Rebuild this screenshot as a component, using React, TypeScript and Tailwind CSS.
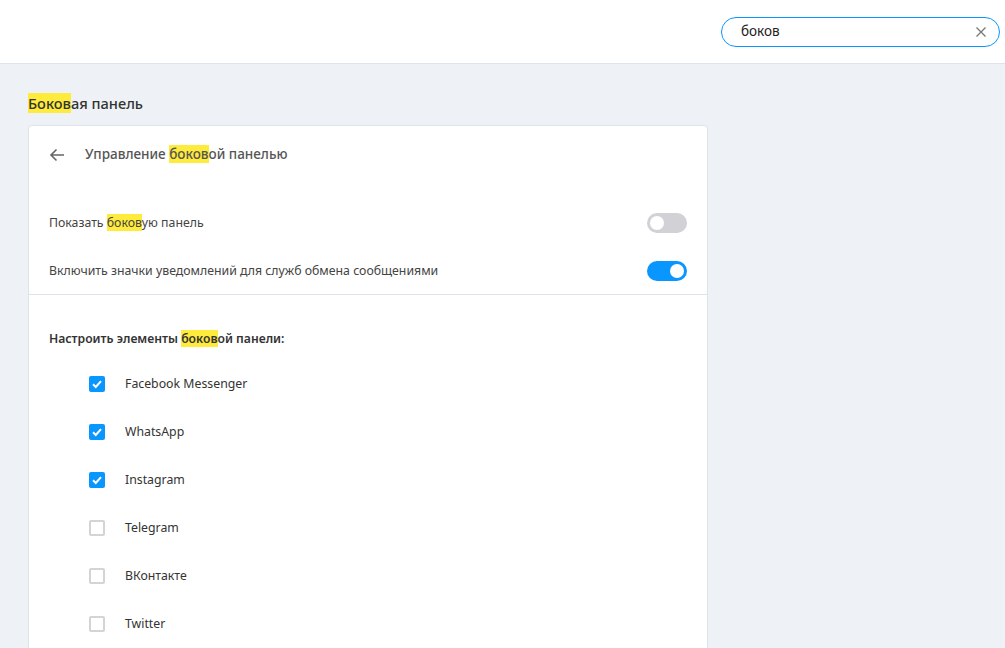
import React from "react";

const H = ({ children }: { children: React.ReactNode }) => (
  <span className="bg-[#ffeb3b]">{children}</span>
);

const Toggle = ({ on }: { on: boolean }) => (
  <div
    className={`w-[40px] h-[20px] rounded-full flex items-center px-[3px] ${
      on ? "bg-[#0a96ff] justify-end" : "bg-[#d1d1d6] justify-start"
    }`}
  >
    <div className="w-[14px] h-[14px] rounded-full bg-white" />
  </div>
);

const Check = ({ on }: { on: boolean }) =>
  on ? (
    <div className="w-[16px] h-[16px] rounded-[2px] bg-[#0a96ff] flex items-center justify-center">
      <svg width="12" height="12" viewBox="0 0 12 12">
        <path d="M2 6.2 L4.8 9 L10 3.2" fill="none" stroke="white" strokeWidth="2" />
      </svg>
    </div>
  ) : (
    <div className="w-[16px] h-[16px] rounded-[2px] border-2 border-[#d3d3d8] bg-white" />
  );

export default function App() {
  const items: [string, boolean][] = [
    ["Facebook Messenger", true],
    ["WhatsApp", true],
    ["Instagram", true],
    ["Telegram", false],
    ["ВКонтакте", false],
    ["Twitter", false],
  ];
  return (
    <div
      className="w-[1005px] h-[648px] overflow-hidden bg-[#eef2f6] text-[#333]"
      style={{ fontFamily: '"Noto Sans", "Open Sans", sans-serif' }}
    >
      <div className="h-[64px] bg-white border-b border-[#dde3ea] flex items-center justify-end pr-[5px]">
        <div className="w-[279px] h-[30px] rounded-full border border-[#0a96ff] flex items-center pl-[19px] pr-[12px] justify-between">
          <span className="text-[13.5px] text-[#222]">боков</span>
          <svg width="12" height="12" viewBox="0 0 12 12">
            <path d="M1.5 1.5 L10.5 10.5 M10.5 1.5 L1.5 10.5" stroke="#777" strokeWidth="1.3" />
          </svg>
        </div>
      </div>
      <div className="pl-[28px] pt-[29px]">
        <div className="text-[14.6px] leading-[20px] font-medium text-[#333] mb-[12px]">
          <H>Боков</H>ая панель
        </div>
        <div className="w-[680px] bg-white border border-[#dde3ea] rounded-[4px]">
          <div className="h-[57px] flex items-center pl-[20px]">
            <svg width="16" height="16" viewBox="0 0 16 16">
              <path d="M15 8 H2 M7.5 2.5 L2 8 L7.5 13.5" fill="none" stroke="#666" strokeWidth="1.6" />
            </svg>
            <span className="ml-[20px] text-[13.5px] text-[#555] font-medium">
              Управление <H>боков</H>ой панелью
            </span>
          </div>
          <div className="px-[20px] pt-[16px] pb-0">
            <div className="h-[48px] flex items-center justify-between">
              <span className="text-[12.3px] text-[#444]">
                Показать <H>боков</H>ую панель
              </span>
              <Toggle on={false} />
            </div>
            <div className="h-[47px] flex items-center justify-between pt-[1px]">
              <span className="text-[12.3px] text-[#444]">
                Включить значки уведомлений для служб обмена сообщениями
              </span>
              <Toggle on={true} />
            </div>
          </div>
          <div className="border-t border-[#dde3ea]" />
          <div className="px-[20px] pt-[32px] pb-[20px]">
            <div className="text-[12.2px] font-semibold text-[#333] h-[24px] flex items-center">
              <span>
                Настроить элементы <H>боков</H>ой панели:
              </span>
            </div>
            <div className="pl-[40px] pt-[9px]">
              {items.map(([n, on]) => (
                <div key={n} className="h-[48px] flex items-center">
                  <Check on={on} />
                  <span className="ml-[20px] text-[12.3px] text-[#333]">{n}</span>
                </div>
              ))}
            </div>
          </div>
        </div>
      </div>
    </div>
  );
}
